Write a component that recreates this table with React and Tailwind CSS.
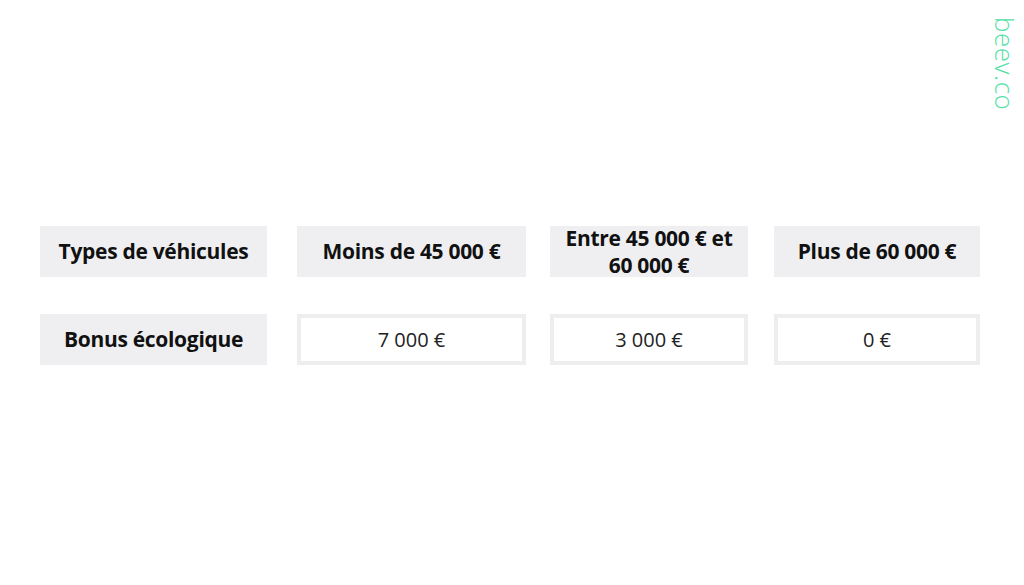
const headers = [
  { label: 'Types de véhicules', w: 'w-[227px]', ml: '' },
  { label: 'Moins de 45 000 €', w: 'w-[229px]', ml: 'ml-[30px]' },
  { label: 'Entre 45 000 € et 60 000 €', w: 'w-[198px]', ml: 'ml-[24px]' },
  { label: 'Plus de 60 000 €', w: 'w-[206px]', ml: 'ml-[26px]' },
];

const values = ['7 000 €', '3 000 €', '0 €'];

export default function App() {
  return (
    <div className="relative w-[1024px] h-[585px] bg-white overflow-hidden" style={{ fontFamily: '"Open Sans", "Liberation Sans", sans-serif' }}>
      <div className="absolute right-[6px] top-[17px] text-[26px] font-light leading-none tracking-[0.5px] text-[#55e0a8] [writing-mode:vertical-rl]">
        beev.co
      </div>

      <div className="pt-[226px] pl-[40px]">
        <div className="flex">
          {headers.map((h) => (
            <div key={h.label} className={`${h.w} ${h.ml} h-[51px] bg-[#efeff1] flex items-center justify-center text-center px-[12px]`}>
              <span className="text-[21px] font-bold leading-[27px] tracking-[-0.3px] text-[#111]">{h.label}</span>
            </div>
          ))}
        </div>

        <div className="flex mt-[37px]">
          <div className="w-[227px] h-[51px] bg-[#efeff1] flex items-center justify-center">
            <span className="text-[21px] font-bold tracking-[-0.3px] text-[#111]">Bonus écologique</span>
          </div>
          {values.map((v, i) => (
            <div
              key={v}
              className={`${headers[i + 1].w} ${headers[i + 1].ml} h-[51px] border-[4px] border-[#eeeeee] bg-white flex items-center justify-center`}
            >
              <span className="text-[20px] text-[#222]">{v}</span>
            </div>
          ))}
        </div>
      </div>
    </div>
  );
}
